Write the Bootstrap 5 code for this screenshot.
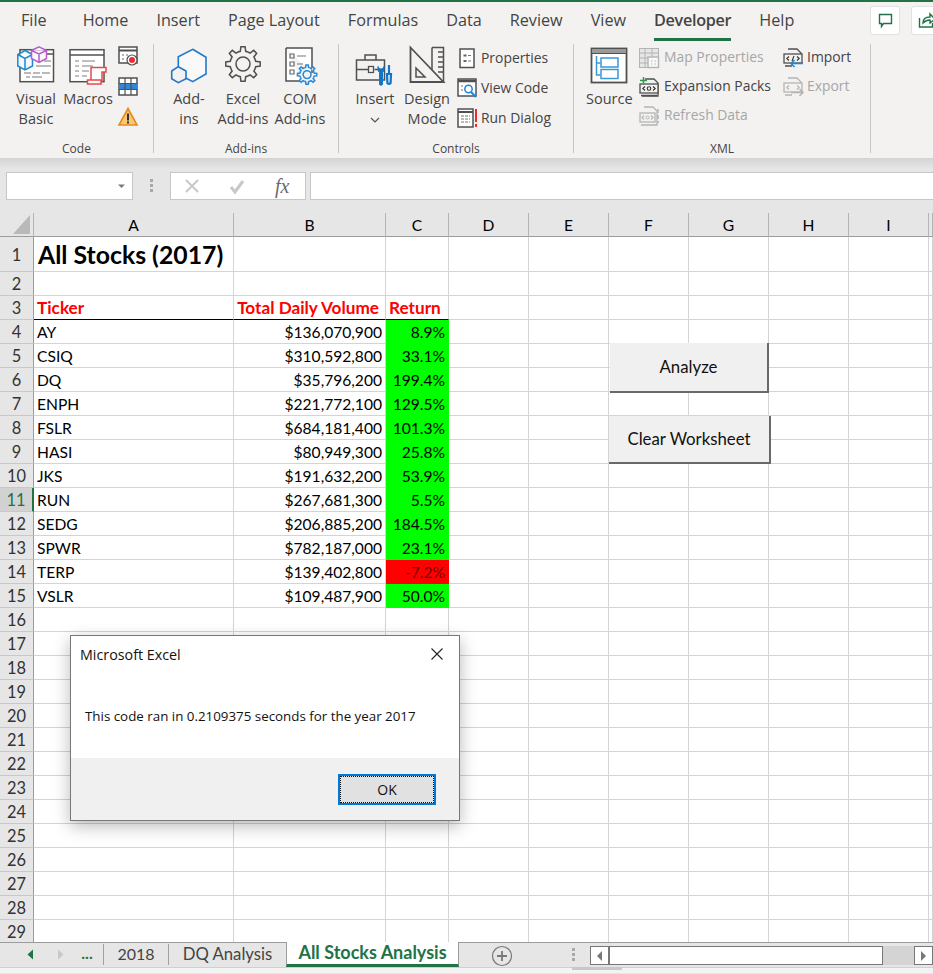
<!DOCTYPE html>
<html lang="en">
<head>
  <meta charset="UTF-8">
  <meta name="viewport" content="width=device-width, initial-scale=1.0">
  <link href="https://cdn.jsdelivr.net/npm/bootstrap@5.3.0/dist/css/bootstrap.min.css" rel="stylesheet">
  <style>
    body {
      width: 933px;
      height: 974px;
      margin: 0;
      overflow: hidden;
      background: #e6e6e6;
      font-family: "Open Sans", "Liberation Sans", sans-serif;
      color: #444;
    }
    svg { display: block; overflow: visible; }
    .ribbon-wrap { background: #f3f2f1; border-top: 2px solid #217346; height: 158px; }
    .tab-row { height: 39px; padding-left: 21px; font-size: 16.2px; }
    .tab-row span { margin-right: 28px; line-height: 36px; height: 39px; white-space: nowrap; }
    .tab-row span:first-child { margin-right: 36px; }
    .tab-row .tab-on { font-weight: 600; border-bottom: 3px solid #217346; letter-spacing: -.3px; }
    .top-btn { position: absolute; top: 4px; width: 30px; height: 29px; background: #fff; border: 1px solid #e1e1e1; border-radius: 3px; }
    .ribbon-body { height: 114px; padding-top: 3px; }
    .rb-group { border-right: 1px solid #c8c6c4; height: 109px; flex: none; }
    .rb-items { height: 97px; }
    .rb-label { font-size: 12px; line-height: 16px; text-align: center; white-space: nowrap; }
    .rb-large { flex: none; text-align: center; font-size: 14.5px; line-height: 19.6px; white-space: nowrap; }
    .rb-slot { height: 45px; display: flex; justify-content: center; padding-top: 2px; }
    .rb-small { font-size: 13.9px; white-space: nowrap; flex: none; }
    .rb-small > div { display: flex; align-items: center; }
    .rb-small svg { flex: none; margin-right: 4px; }
    .is-off { color: #a6a6a6; }
    .formula-bar { height: 55px; padding-top: 14px; background: linear-gradient(#d4d4d4, #e6e6e6 11px); }
    .fx-box { height: 28px; background: #fff; border: 1px solid #c6c6c6; flex: none; }
    .grip-dots { width: 3px; height: 13px; margin: 7px 17px 0 17px; flex: none; background: repeating-linear-gradient(#a8a8a8 0 3px, transparent 3px 5px); }
    .sheet-area { position: relative; height: 730px; overflow: hidden; background: #fff; }
    .sheet-table { table-layout: fixed; width: 933px; border-collapse: separate; border-spacing: 0; font-family: Lato, "Liberation Sans", sans-serif; font-size: 15.6px; color: #000; }
    .sheet-table th, .sheet-table td { padding: 1px 3px 0; height: 24px; line-height: 22px; border: 0; border-right: 1px solid #d4d4d4; border-bottom: 1px solid #d4d4d4; white-space: nowrap; overflow: visible; font-weight: 400; vertical-align: middle; }
    .sheet-table thead th { background: #e6e6e6; text-align: center; border-right-color: #b4b4b4; border-bottom-color: #9c9c9c; }
    .sheet-table tbody th { background: #e6e6e6; color: #333; font-size: 16.4px; text-align: center; padding: 1px 0 0; border-right-color: #9c9c9c; border-bottom-color: #c8c8c8; }
    .sheet-table tbody th.row-sel { background: #d2d2d2; color: #217346; border-right: 2px solid #217346; }
    .sheet-table tr.row-title td, .sheet-table tr.row-title th { height: 35px; }
    .sheet-table td.big-title { font-size: 24.8px; font-weight: 700; line-height: 30px; padding-left: 4px; }
    .sheet-table tr.row-head td { color: #f00; font-size: 17.2px; font-weight: 700; border-bottom-color: #000; }
    .sheet-table td.num-cell { text-align: right; }
    .sheet-table tr.row-head td.num-cell { padding-right: 6px; }
    .sheet-table td.ret-up { background: #0f0; border-color: #0f0; text-align: right; }
    .sheet-table td.ret-down { background: #f00; border-color: #f00; color: #700000; text-align: right; }
    .corner-mark { width: 0; height: 0; margin: 0 0 0 13px; border-style: solid; border-width: 0 0 19px 17px; border-color: transparent transparent #b9b9b9 transparent; }
    .sheet-btn { position: absolute; border: 0; border-right: 2px solid #696969; border-bottom: 2px solid #696969; background: #f0f0f0; color: #111; font-family: Lato, sans-serif; font-size: 16.8px; padding: 0; border-radius: 0; }
    .msg-box { position: absolute; left: 70px; top: 422px; width: 390px; height: 186px; background: #fff; border: 1px solid #777; box-shadow: 0 5px 16px rgba(0,0,0,.28); font-family: "Open Sans", sans-serif; color: #111; }
    .msg-title { height: 38px; padding: 8px 16px 0 9px; font-size: 14.3px; }
    .msg-text { height: 84px; padding: 32px 0 0 14px; font-size: 13.35px; }
    .msg-foot { background: #f0f0f0; flex-grow: 1; padding: 16px 23px 0 0; }
    .ok-btn { width: 98px; height: 31px; padding: 0; font-size: 14px; line-height: 25px; border: 2px solid #0078d7; border-radius: 0; background: #e1e1e1; color: #111; outline: 1px dotted #111; outline-offset: -3px; }
    .tab-bar { height: 25px; margin-top: -1px; border-top: 1px solid #9c9c9c; background: #e6e6e6; font-family: Lato, sans-serif; font-size: 16px; position: relative; }
    .nav-slot { flex: none; height: 21px; margin-top: 1px; line-height: 20px; text-align: center; }
    .sheet-tab { flex: none; height: 21px; margin-top: 1px; line-height: 20px; text-align: center; border-right: 1px solid #a0a0a0; white-space: nowrap; }
    .tab-dq { font-size: 16.7px; border-right: 0; border-left: 1px solid #a0a0a0; }
    .tab-active { flex: none; height: 25px; margin-top: -1px; background: #fff; border-bottom: 3px solid #217346; color: #217346; font-weight: 700; text-align: center; line-height: 21px; font-size: 18px; white-space: nowrap; border-left: 1px solid #9c9c9c; border-right: 1px solid #9c9c9c; }
    .scroll-btn { flex: none; width: 19px; height: 19px; background: #fff; border: 1px solid #777; display: flex; align-items: center; justify-content: center; }
    .scroll-thumb { flex: none; width: 275px; height: 19px; background: #fff; border: 1px solid #777; border-left-width: 2px; margin-left: -1px; }
    .scroll-track { flex: none; width: 31px; height: 19px; background: #d4d4d4; }
    .status-strip { height: 6px; background: #f3f3f3; border-top: 1px solid #d0d0d0; position: relative; }
    .status-strip i { position: absolute; left: 572px; top: -1px; width: 50px; height: 3px; background: #c8c8c8; }
  </style>
  <title>All Stocks Analysis</title>
</head>
<body>
  <svg width="0" height="0" class="position-absolute">
    <defs>
      <g id="gearTeeth">
        <path id="gearTooth" d="M13 6l2.3-.7.6-4.5h4.2l.6 4.5L23 6"/>
        <use href="#gearTooth" transform="rotate(45 18 18)"/>
        <use href="#gearTooth" transform="rotate(90 18 18)"/>
        <use href="#gearTooth" transform="rotate(135 18 18)"/>
        <use href="#gearTooth" transform="rotate(180 18 18)"/>
        <use href="#gearTooth" transform="rotate(225 18 18)"/>
        <use href="#gearTooth" transform="rotate(270 18 18)"/>
        <use href="#gearTooth" transform="rotate(315 18 18)"/>
        <circle cx="18" cy="18" r="7"/>
      </g>
    </defs>
  </svg>

  <div class="ribbon-wrap">
    <div class="tab-row d-flex position-relative">
      <span>File</span><span>Home</span><span>Insert</span><span>Page Layout</span><span>Formulas</span><span>Data</span><span>Review</span><span>View</span><span class="tab-on">Developer</span><span>Help</span>
      <div class="top-btn" style="left:870px">
        <svg width="28" height="27" fill="none" stroke="#217346" stroke-width="1.4"><path d="M8.5 7.5h12v9h-8l-2 3v-3h-2z"/></svg>
      </div>
      <div class="top-btn" style="left:911px">
        <svg width="28" height="27" fill="none" stroke="#217346" stroke-width="1.4"><path d="M7.5 11v9h13v-4M11 16c0-4 3-6 7-6V7l5 5-5 4v-3c-3 0-5 1-7 3z"/></svg>
      </div>
    </div>
    <div class="ribbon-body d-flex">
      <!-- Code -->
      <div class="rb-group" style="width:154px">
        <div class="rb-items d-flex" style="padding-left:10px">
          <div class="rb-large" style="width:52px">
            <div class="rb-slot">
              <svg width="38" height="37" fill="none">
                <rect x="3" y="3.7" width="33.5" height="32" fill="#fff" stroke="#505050" stroke-width="1.5"/>
                <path d="M18 8h18" stroke="#505050" stroke-width="1.5"/>
                <path d="M19 15h6m2 0h7M19 20h15M7 27h7m2 0h7m2 0h8M9 31h4m2 0h10" stroke="#777" stroke-width="1.2"/>
                <path d="M8 4.5l7.5 4v11.5L8 24 .8 20V8.500zM.8 8.500l7.200 4 7.500-4M8 12.500V24" fill="#f3f9fd" stroke="#1e88d0" stroke-width="1.5"/>
                <path d="M22 .8l7.500 3.700v8l-7.500 4-7.500-4v-8zM14.500 4.500l7.500 3.500 7.500-3.500M22 8v8.500" fill="#fbf6fd" stroke="#b35ec8" stroke-width="1.5"/>
              </svg>
            </div>
            Visual<br>Basic
          </div>
          <div class="rb-large" style="width:52px">
            <div class="rb-slot">
              <svg width="38" height="37" fill="none">
                <rect x="1" y="3.700" width="34" height="32" fill="#fff" stroke="#505050" stroke-width="1.5"/>
                <path d="M1 9h34" stroke="#505050" stroke-width="1.500"/>
                <path d="M6 15h4m3 0h13M6 20h4m3 0h11M6 25h4m3 0h7M6 30h4m3 0h5" stroke="#808080" stroke-width="1.200"/>
                <path d="M22 21.500h15v4.500h-4V35H22z" fill="#fff" stroke="#e8484a" stroke-width="1.500"/>
                <path d="M18.500 34h13.500v4H18.500z" fill="#fff" stroke="#e8484a" stroke-width="1.500"/>
              </svg>
            </div>
            Macros
          </div>
          <div class="d-flex flex-column ps-1" style="gap:11px;padding-top:2px">
            <svg width="20" height="20" fill="none"><rect x="1" y="1" width="18" height="16" fill="#fff" stroke="#505050" stroke-width="1.500"/><path d="M1 4.500h18" stroke="#505050" stroke-width="2"/><path d="M4 9h2m-2 4h2M8 9h2" stroke="#666"/><circle cx="14" cy="14" r="5" fill="#fff" stroke="#505050" stroke-width="1.200"/><circle cx="14" cy="14" r="3" fill="#ee2a2e"/></svg>
            <svg width="20" height="19" fill="none"><rect x="1" y="1" width="18" height="17" fill="#fff" stroke="#505050" stroke-width="1.500"/><rect x="1" y="6.500" width="18" height="6" fill="#2f86d8"/><path d="M7 1v17M13 1v17M1 6.500h18M1 12.500h18" stroke="#505050" stroke-width="1.200"/></svg>
            <svg width="20" height="19"><path d="M10 1.500L19 18H1z" fill="#fbc774" stroke="#e58a1f" stroke-width="1.600"/><path d="M10 6.500v7" stroke="#333" stroke-width="2"/><path d="M10 14.500v2" stroke="#333" stroke-width="2"/></svg>
          </div>
        </div>
        <div class="rb-label">Code</div>
      </div>
      <!-- Add-ins -->
      <div class="rb-group" style="width:185px">
        <div class="rb-items d-flex" style="padding-left:11px">
          <div class="rb-large" style="width:48px">
            <div class="rb-slot">
              <svg width="38" height="38" fill="none" stroke="#1f79c8" stroke-width="1.600"><path d="M22.700 3.300L36 11.300V28l-13.300 7.700L8.300 28V10.700z" fill="#f9f9f9"/><path d="M8.300 20.700l7.700 4.300v7.700l-7.700 4-6.600-4V25z" fill="#f3f2f1"/></svg>
            </div>
            Add-<br>ins
          </div>
          <div class="rb-large" style="width:60px">
            <div class="rb-slot">
              <svg width="36" height="36" fill="none" stroke="#505050" stroke-width="1.500"><use href="#gearTeeth"/></svg>
            </div>
            Excel<br>Add-ins
          </div>
          <div class="rb-large" style="width:54px">
            <div class="rb-slot">
              <svg width="36" height="40" fill="none">
                <path d="M4 2h26v25M20 35H4V2" fill="#fff" stroke="#505050" stroke-width="1.500"/>
                <path d="M8 8h4v4H8zM8 16h4v4H8zM8 24h4v4H8z" stroke="#666" stroke-width="1.200"/>
                <path d="M15 10h9M15 18h6" stroke="#777" stroke-width="1.200"/>
                <g transform="translate(15 18.500) scale(.56)" stroke="#2b8ad8" stroke-width="2.800" fill="#f3f2f1"><use href="#gearTeeth"/></g>
              </svg>
            </div>
            COM<br>Add-ins
          </div>
        </div>
        <div class="rb-label">Add-ins</div>
      </div>
      <!-- Controls -->
      <div class="rb-group" style="width:235px">
        <div class="rb-items d-flex" style="padding-left:14px">
          <div class="rb-large" style="width:44px">
            <div class="rb-slot" style="padding-top:8px">
              <svg width="40" height="35" fill="none">
                <path d="M1.500 8h28v20h-28zM10 8V3h11v5M1.500 17.500h12m6 0h8" stroke="#505050" stroke-width="1.500"/>
                <rect x="13.500" y="14.500" width="5" height="6" fill="#f3f2f1" stroke="#505050" stroke-width="1.300"/>
                <path d="M23 14.500v3.500a3.500 3.500 0 0 0 1.500 2.500v12a2 2 0 0 0 3 0v-12a3.500 3.500 0 0 0 1.500-2.500v-3.500l-1.500 2.500h-3z" fill="#0f76c9" stroke="#0f76c9"/>
                <path d="M34 13v8m-2 1h4l-.4 9a2 2 0 0 1-3.200 0z" stroke="#0f76c9" stroke-width="2.200"/>
              </svg>
            </div>
            Insert
            <svg class="mx-auto mt-2" width="10" height="6" fill="none" stroke="#555" stroke-width="1.200"><path d="M1 1l4 4 4-4"/></svg>
          </div>
          <div class="rb-large" style="width:60px">
            <div class="rb-slot">
              <svg width="36" height="38" fill="none" stroke="#505050">
                <path d="M23 1.500h11.500V36" stroke-width="1.500"/><path d="M23 1.500V24" stroke-width="1.500"/>
                <path d="M29 6h5M29 11h5M29 16h5M29 21h5M29 26h5" stroke-width="1.300"/>
                <path d="M1.500 1.500L34.500 36H1.500z" stroke-width="1.800"/>
                <path d="M7 22l9 9H7z" stroke-width="1.500"/>
              </svg>
            </div>
            Design<br>Mode
          </div>
          <div class="rb-small" style="margin-top:-1px">
            <div style="height:30px"><svg width="20" height="20" fill="none"><rect x="3" y="1" width="14" height="18.500" fill="#fff" stroke="#505050" stroke-width="1.500"/><path d="M6.500 6.500h3v2h-3zM6.500 12h3v2h-3z" fill="#666"/><path d="M11 7.500h3M11 13h3" stroke="#777" stroke-width="1.200"/></svg>Properties</div>
            <div style="height:30px"><svg width="20" height="20" fill="none"><rect x="1" y="1" width="18" height="17" fill="#fff" stroke="#505050" stroke-width="1.500"/><path d="M1 3h18" stroke="#505050" stroke-width="2.500"/><path d="M4 8h2M4 12h2" stroke="#777"/><circle cx="11.500" cy="11" r="3.700" fill="#fff" stroke="#1f86d9" stroke-width="1.500"/><path d="M14 14l5 5" stroke="#1f86d9" stroke-width="2"/></svg>View Code</div>
            <div style="height:30px"><svg width="20" height="20" fill="none"><rect x="1" y="1" width="15" height="18" fill="#fff" stroke="#505050" stroke-width="1.500"/><path d="M1 4h15" stroke="#505050" stroke-width="2"/><path d="M4 8h9M4 11h9M4 14h9" stroke="#777" stroke-dasharray="3 1"/><path d="M19 1v13" stroke="#ee2a2e" stroke-width="2"/><path d="M19 16v3" stroke="#ee2a2e" stroke-width="2"/></svg>Run Dialog</div>
          </div>
        </div>
        <div class="rb-label">Controls</div>
      </div>
      <!-- XML -->
      <div class="rb-group" style="width:297px">
        <div class="rb-items d-flex" style="padding-left:12px">
          <div class="rb-large" style="width:46px">
            <div class="rb-slot" style="padding-top:3px">
              <svg width="38" height="37" fill="none"><rect x="1.500" y="1.500" width="35" height="34" fill="#fff" stroke="#505050" stroke-width="1.800"/><rect x="1.500" y="1.500" width="35" height="5" fill="#9a9a9a" stroke="#505050" stroke-width="1"/><path d="M6.500 9v19h4M6.500 16h4" stroke="#3a98d8" stroke-width="1.500"/><rect x="11" y="11" width="17" height="9" stroke="#3a98d8" stroke-width="1.500"/><rect x="11" y="22.500" width="17" height="9" stroke="#3a98d8" stroke-width="1.500"/></svg>
            </div>
            Source
          </div>
          <div class="rb-small" style="width:144px;margin-left:7px;margin-top:-1px">
            <div style="height:29px" class="is-off"><svg style="margin-right:5px" width="20" height="20" fill="none" stroke="#b4b4b4"><rect x=".5" y=".5" width="19" height="19" fill="#e6e6e6"/><path d="M.5 5h19M.5 10h19M.5 15h9M6 .5v19M13 .5v9" /><rect x="9" y="9" width="10.500" height="10.500" fill="#f8f8f8" stroke-width="1.400"/><path d="M12 13h1.500m2 0H17M12 16h1.500m2 0H17"/></svg>Map Properties</div>
            <div style="height:29px"><svg style="margin-right:5px" width="20" height="20" fill="none"><path d="M6 2h9l4 4v13H3" stroke="#505050" stroke-width="1.300"/><rect x="1" y="7" width="18" height="9" fill="#f3f2f1" stroke="#505050" stroke-width="1.300"/><path d="M6 9.500L3.800 11.500 6 13.500M14 9.500l2.200 2L14 13.500" stroke="#333" stroke-width="1.100"/><circle cx="10" cy="11.500" r="1.800" stroke="#333" stroke-width="1.100"/><path d="M4.500 0v7M1 3.500h7" stroke="#2e9a47" stroke-width="1.500"/><path d="M2 18.500h16" stroke="#505050" stroke-width="1.500"/></svg>Expansion Packs</div>
            <div style="height:29px" class="is-off"><svg style="margin-right:5px" width="20" height="20" fill="none" stroke="#b4b4b4"><path d="M5 1h9l4 4v14H2" stroke-width="1.300"/><rect x="1" y="7" width="15" height="9" fill="#f3f2f1" stroke-width="1.300"/><path d="M5 9.500L3 11.500 5 13.500M12 9.500l2 2-2 2" stroke-width="1.100"/><circle cx="8.500" cy="11.500" r="1.500"/><path d="M19 3v14" stroke-width="1.500" stroke-dasharray="4 2"/></svg>Refresh Data</div>
          </div>
          <div class="rb-small" style="margin-top:-1px">
            <div style="height:29px"><svg width="20" height="20" fill="none"><path d="M5 1h9l4 4v3M2 18h7" stroke="#505050" stroke-width="1.300"/><rect x="1" y="6" width="18" height="9" fill="#f3f2f1" stroke="#505050" stroke-width="1.300"/><path d="M6 8.500L3.800 10.500 6 12.500M14 8.500l2.200 2-2.200 2M9 13l2-5" stroke="#333" stroke-width="1.100"/><path d="M20 15.500H8m3.500-3.500L8 15.500l3.500 3.500" stroke="#1f86d9" stroke-width="1.500"/></svg>Import</div>
            <div style="height:29px" class="is-off"><svg width="20" height="20" fill="none" stroke="#b4b4b4"><path d="M5 1h9l4 4v3M2 18h7" stroke-width="1.300"/><rect x="1" y="6" width="18" height="9" fill="#f3f2f1" stroke-width="1.300"/><path d="M6 8.500L3.800 10.500 6 12.500M14 8.500l2.200 2-2.200 2" stroke-width="1.100"/><path d="M8 15.500h12m-3.500-3.500l3.500 3.500-3.500 3.500" stroke-width="1.500"/></svg>Export</div>
          </div>
        </div>
        <div class="rb-label">XML</div>
      </div>
    </div>
  </div>

  <div class="formula-bar d-flex">
    <div class="fx-box d-flex justify-content-end" style="width:127px;margin-left:6px">
      <svg class="mt-2" width="18" height="12"><path d="M4 3.500h7L7.500 7z" fill="#7a7a7a"/></svg>
    </div>
    <div class="grip-dots"></div>
    <div class="fx-box d-flex align-items-center" style="width:136px">
      <svg width="136" height="26" fill="none">
        <path d="M15 7l12 12M27 7L15 19" stroke="#c8c8c8" stroke-width="2"/>
        <path d="M60 14l4 5 8-11" stroke="#c8c8c8" stroke-width="3"/>
      </svg>
      <span class="position-absolute" style="margin-left:104px;font:italic 20px 'Liberation Serif',serif;color:#6a6a6a">fx</span>
    </div>
    <div class="fx-box flex-grow-1" style="margin-left:4px;border-right:0"></div>
  </div>

  <div class="sheet-area">
    <table class="table table-borderless mb-0 sheet-table">
      <colgroup>
        <col style="width:34px"><col style="width:200px"><col style="width:152px"><col style="width:63px">
        <col style="width:80px"><col style="width:80px"><col style="width:80px"><col style="width:80px"><col style="width:80px"><col style="width:80px"><col style="width:4px">
      </colgroup>
      <thead>
        <tr>
          <th class="p-0"><div class="corner-mark"></div></th>
          <th>A</th><th>B</th><th>C</th><th>D</th><th>E</th><th>F</th><th>G</th><th>H</th><th>I</th><th class="p-0"></th>
        </tr>
      </thead>
      <tbody id="sheetRows"></tbody>
    </table>

    <button type="button" class="btn sheet-btn" style="left:610px;top:130px;width:159px;height:50px">Analyze</button>
    <button type="button" class="btn sheet-btn" style="left:609px;top:203px;width:162px;height:48px">Clear Worksheet</button>

    <div class="msg-box d-flex flex-column">
      <div class="msg-title d-flex justify-content-between">
        <span>Microsoft Excel</span>
        <svg class="mt-1" width="12" height="12" stroke="#222" stroke-width="1.100"><path d="M.5.500l11 11M11.500.500l-11 11"/></svg>
      </div>
      <div class="msg-text">This code ran in 0.2109375 seconds for the year 2017</div>
      <div class="msg-foot d-flex justify-content-end align-items-start">
        <button type="button" class="btn ok-btn">OK</button>
      </div>
    </div>
  </div>

  <div class="tab-bar d-flex">
    <div class="nav-slot" style="width:45px;padding:5px 0 0 27px"><svg width="7" height="11"><path d="M6 .5v10L.5 5.500z" fill="#217346"/></svg></div>
    <div class="nav-slot" style="width:26px;padding:5px 0 0 12px"><svg width="7" height="11"><path d="M1 .5v10l5.500-5z" fill="#c8c8c8"/></svg></div>
    <div class="nav-slot" style="width:33px;color:#217346;font-weight:700;border-right:1px solid #a0a0a0;line-height:18px">...</div>
    <div class="sheet-tab border-0" style="width:64px">2018</div>
    <div class="sheet-tab tab-dq" style="width:118px">DQ Analysis</div>
    <div class="tab-active" style="width:173px">All Stocks Analysis</div>
    <div class="nav-slot" style="width:113px;padding:2px 0 0 33px">
      <svg width="20" height="20" fill="none" stroke="#777"><circle cx="10" cy="10" r="9.500" stroke-width="1.200"/><path d="M10 5v10M5 10h10" stroke-width="1.800"/></svg>
    </div>
    <div class="grip-dots" style="margin:5px 15px 0 0;height:13px"></div>
    <div class="d-flex" style="margin:3px 0 0 0">
      <div class="scroll-btn"><svg width="7" height="10"><path d="M6 0v10L1 5z" fill="#777"/></svg></div>
      <div class="scroll-thumb"></div>
      <div class="scroll-track"></div>
      <div class="scroll-btn"><svg width="7" height="10"><path d="M1 0v10l5-5z" fill="#777"/></svg></div>
    </div>
  </div>
  <div class="status-strip"><i></i></div>

  <script src="https://cdn.jsdelivr.net/npm/bootstrap@5.3.0/dist/js/bootstrap.bundle.min.js"></script>
  <script>
    // Stock rows, starting on sheet row 4
    const stocks = [
      ['AY', '$136,070,900', '8.9%'],
      ['CSIQ', '$310,592,800', '33.1%'],
      ['DQ', '$35,796,200', '199.4%'],
      ['ENPH', '$221,772,100', '129.5%'],
      ['FSLR', '$684,181,400', '101.3%'],
      ['HASI', '$80,949,300', '25.8%'],
      ['JKS', '$191,632,200', '53.9%'],
      ['RUN', '$267,681,300', '5.5%'],
      ['SEDG', '$206,885,200', '184.5%'],
      ['SPWR', '$782,187,000', '23.1%'],
      ['TERP', '$139,402,800', '-7.2%'],
      ['VSLR', '$109,487,900', '50.0%']
    ];
    const emptyCells = '<td></td>'.repeat(7);
    let html = '';
    for (let n = 1; n <= 29; n++) {
      const head = `<th class="${n === 11 ? 'row-sel' : ''}">${n}</th>`;
      if (n === 1) {
        html += `<tr class="row-title">${head}<td class="big-title">All Stocks (2017)</td><td></td><td></td>${emptyCells}</tr>`;
      } else if (n === 3) {
        html += `<tr class="row-head">${head}<td>Ticker</td><td class="num-cell">Total Daily Volume</td><td>Return</td>${'<td style="border-bottom-color:#d4d4d4"></td>'.repeat(7)}</tr>`;
      } else if (n >= 4 && n <= 15) {
        const s = stocks[n - 4];
        const cls = s[2].startsWith('-') ? 'ret-down' : 'ret-up';
        html += `<tr>${head}<td>${s[0]}</td><td class="num-cell">${s[1]}</td><td class="${cls}">${s[2]}</td>${emptyCells}</tr>`;
      } else {
        html += `<tr>${head}<td></td><td></td><td></td>${emptyCells}</tr>`;
      }
    }
    document.getElementById('sheetRows').innerHTML = html;
  </script>
</body>
</html>
